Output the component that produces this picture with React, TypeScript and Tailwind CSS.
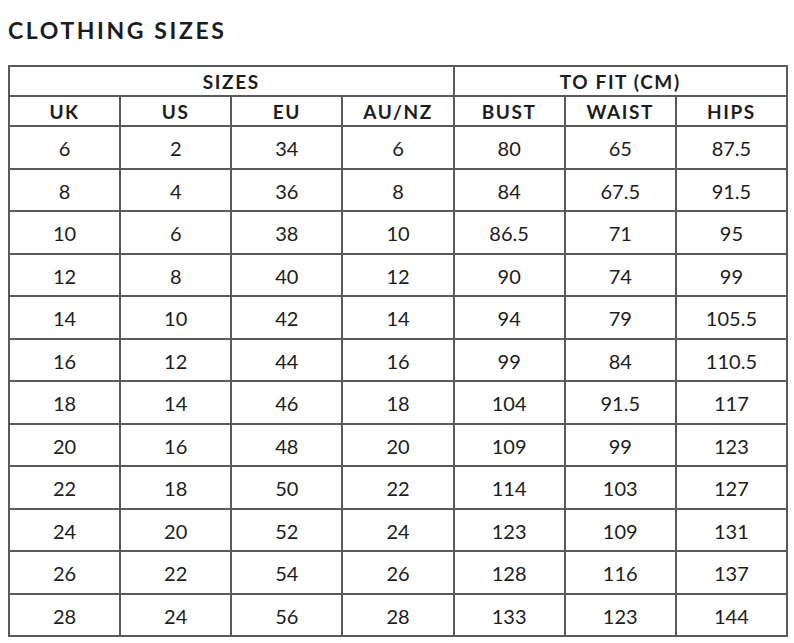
const rows: string[][] = [
  ['6', '2', '34', '6', '80', '65', '87.5'],
  ['8', '4', '36', '8', '84', '67.5', '91.5'],
  ['10', '6', '38', '10', '86.5', '71', '95'],
  ['12', '8', '40', '12', '90', '74', '99'],
  ['14', '10', '42', '14', '94', '79', '105.5'],
  ['16', '12', '44', '16', '99', '84', '110.5'],
  ['18', '14', '46', '18', '104', '91.5', '117'],
  ['20', '16', '48', '20', '109', '99', '123'],
  ['22', '18', '50', '22', '114', '103', '127'],
  ['24', '20', '52', '24', '123', '109', '131'],
  ['26', '22', '54', '26', '128', '116', '137'],
  ['28', '24', '56', '28', '133', '123', '144'],
];

const columns = ['UK', 'US', 'EU', 'AU/NZ', 'BUST', 'WAIST', 'HIPS'];

export default function App() {
  return (
    <div className="min-h-screen bg-white text-[#1c1c1c] font-['Lato','Liberation_Sans',sans-serif]">
      <div className="pl-[8px] pt-[17px]">
        <h1 className="text-[23px] leading-[26px] font-bold tracking-[2.6px]">CLOTHING SIZES</h1>

        <table className="mt-[22px] w-[780px] table-fixed border-collapse border-2 border-[#5a5a5a]">
          <thead>
            <tr className="h-[30px]">
              <th colSpan={4} className="border-2 border-[#5a5a5a] text-[19px] font-bold tracking-[1.6px] leading-none">
                SIZES
              </th>
              <th colSpan={3} className="border-2 border-[#5a5a5a] text-[19px] font-bold tracking-[1.6px] leading-none">
                TO FIT (CM)
              </th>
            </tr>
            <tr className="h-[30px]">
              {columns.map((c) => (
                <th key={c} className="border-2 border-[#5a5a5a] text-[19px] font-bold tracking-[1.6px] leading-none">
                  {c}
                </th>
              ))}
            </tr>
          </thead>
          <tbody>
            {rows.map((r, i) => (
              <tr key={i} className="h-[42.5px]">
                {r.map((v, j) => (
                  <td key={j} className="border-2 border-[#5a5a5a] text-center text-[20px] leading-none pt-[2px]">
                    {v}
                  </td>
                ))}
              </tr>
            ))}
          </tbody>
        </table>
      </div>
    </div>
  );
}
